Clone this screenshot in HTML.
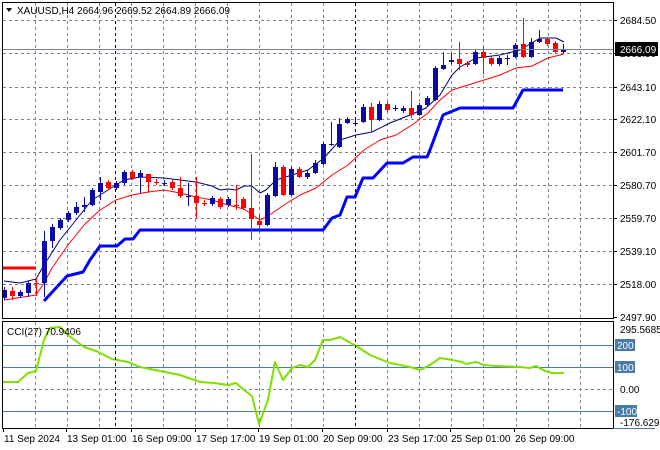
<!DOCTYPE html>
<html><head><meta charset="utf-8"><style>
body{margin:0;background:#fff;width:660px;height:450px;overflow:hidden}
svg{display:block;font-family:"Liberation Sans",sans-serif;font-size:10px}
</style></head><body>
<svg id="s" width="660" height="450" xmlns="http://www.w3.org/2000/svg">
<rect width="660" height="450" fill="#fff"/>
<g id="grid" stroke="#7a8491" stroke-dasharray="3,3" stroke-width="1"></g>
<g id="plot"></g>
<line x1="3" y1="49.5" x2="613" y2="49.5" stroke="#7a8491"/>
<line x1="115.5" y1="3" x2="115.5" y2="428" stroke="#000" stroke-dasharray="3,3"/>
<line x1="355.5" y1="3" x2="355.5" y2="428" stroke="#000" stroke-dasharray="3,3"/>
<rect x="2.5" y="2.5" width="611" height="316" fill="none" stroke="#000"/>
<rect x="2.5" y="321.5" width="611" height="107" fill="none" stroke="#000"/>
<polygon points="6,8 12,8 9,12" fill="#000"/>
<text x="17" y="14" fill="#000">XAUUSD,H4  2664.96 2669.52 2664.89 2666.09</text>
<text x="7" y="335" fill="#000">CCI(27) 70.9406</text>
<g id="axis" fill="#000"></g>
</svg>
<script>
var NS="http://www.w3.org/2000/svg",g=document.getElementById('grid'),p=document.getElementById('plot'),ax=document.getElementById('axis');
function el(par,t,a,txt){var e=document.createElementNS(NS,t);for(var k in a)e.setAttribute(k,a[k]);if(txt)e.textContent=txt;par.appendChild(e);return e;}
var vx=[35,67,99,131,163,195,227,259,291,323,387,419,451,483,516,548,580];
vx.forEach(function(x){el(g,'line',{x1:x+.5,y1:3,x2:x+.5,y2:318});el(g,'line',{x1:x+.5,y1:322,x2:x+.5,y2:428});});
var hy=[20,53,87,119,152,185,218,251,284];
hy.forEach(function(y){el(g,'line',{x1:3,y1:y+.5,x2:613,y2:y+.5});});
el(g,'line',{x1:3,y1:389.5,x2:613,y2:389.5});
[345,367,411].forEach(function(y){el(p,'line',{x1:3,y1:y+.5,x2:613,y2:y+.5,stroke:'#4a7aa8'});});
// candles: x, top, bottom, wickTop, wickBot, color
var C=[[4,290,298,287,300,'b'],[12,291,296,287,300,'r'],[20,292,296,290,298,'b'],[28,283,293,281,297,'b'],[36,283,284,277,296,'r'],[44,241,283,231,297,'b'],[52,227,241,224,248,'b'],[60,220,228,218,230,'b'],[68,213,220,211,222,'b'],[76,207,213,202,215,'b'],[84,205,207,197,212,'b'],[92,190,205,188,206,'b'],[100,183,192,177,200,'b'],[108,182,188,180,190,'r'],[116,183,188,181,190,'b'],[124,172,183,170,185,'b'],[132,172,178,170,180,'r'],[140,173,177,170,193,'b'],[148,174,182,175,193,'r'],[156,182,183,179,185,'r'],[164,183,184,180,186,'b'],[172,182,188,180,190,'r'],[180,188,196,177,198,'r'],[188,196,197,183,206,'b'],[196,196,203,177,218,'r'],[204,203,204,200,206,'r'],[212,198,204,196,206,'b'],[220,199,207,197,209,'r'],[228,199,205,197,207,'b'],[236,205,206,185,210,'r'],[243,199,208,197,210,'r'],[251,208,219,154,240,'r'],[259,221,225,215,232,'r'],[267,195,225,193,226,'b'],[275,167,196,162,197,'b'],[283,167,195,165,196,'r'],[291,169,195,167,196,'b'],[299,169,177,167,178,'r'],[307,173,177,170,179,'b'],[315,163,173,160,174,'b'],[323,144,164,142,165,'b'],[331,144,145,122,146,'b'],[339,124,147,118,148,'b'],[347,119,123,117,124,'b'],[355,123,124,120,126,'b'],[363,107,122,104,123,'b'],[371,107,120,103,132,'r'],[379,104,120,101,121,'b'],[387,104,110,102,112,'r'],[395,108,109,105,111,'b'],[403,108,111,106,113,'b'],[411,108,115,91,118,'r'],[419,105,115,103,116,'b'],[427,98,105,96,106,'b'],[435,68,100,66,101,'b'],[443,65,69,52,70,'b'],[451,60,62,53,64,'b'],[459,59,64,42,70,'r'],[467,63,65,61,67,'r'],[475,52,64,50,65,'b'],[483,52,58,47,74,'r'],[491,58,64,56,66,'r'],[499,58,64,56,66,'b'],[507,58,59,55,65,'b'],[515,45,57,43,58,'b'],[523,44,57,18,58,'r'],[531,42,57,38,58,'b'],[539,39,42,30,43,'b'],[547,39,44,37,46,'r'],[555,43,52,41,53,'r'],[563,49,52,44,53,'b']];
function pl(pts,col,w){el(p,'polyline',{points:pts.map(function(a){return a.join(',')}).join(' '),fill:'none',stroke:col,'stroke-width':w,'stroke-linejoin':'round'});}
pl([[3,268],[36,268]],'#f00',3);
pl([[44,301],[67,276],[83,272],[90,260],[100,246],[117,246],[125,239],[133,239],[140,230],[323,230],[332,218],[340,215],[347,197],[355,197],[363,178],[373,178],[387,163],[403,163],[413,157],[427,157],[430,150],[443,115],[460,108],[513,108],[523,90],[563,90]],'#0000ff',3);
pl([[4,300],[36,295],[44,283],[52,268],[68,245],[84,225],[100,210],[116,200],[132,195],[148,192],[164,190],[180,193],[196,197],[212,200],[228,205],[244,209],[260,220],[268,216],[284,205],[300,195],[316,188],[332,175],[348,165],[364,150],[380,140],[396,135],[412,125],[428,113],[440,100],[452,90],[468,85],[484,80],[500,75],[516,68],[532,66],[548,58],[564,54]],'#f00',1);
pl([[4,281],[20,283],[36,279],[44,265],[60,240],[76,220],[92,200],[108,190],[124,180],[140,177],[164,178],[180,180],[196,182],[212,186],[220,190],[228,189],[236,190],[244,186],[252,186],[260,193],[266,190],[276,180],[292,175],[308,170],[324,158],[340,140],[356,135],[372,132],[390,123],[410,115],[426,108],[440,95],[452,75],[460,67],[476,58],[500,55],[520,50],[540,38],[556,38],[564,42]],'#00007a',1);
C.forEach(function(c){var col=c[5]=='b'?'#0a0aa8':'#f00';var x=c[0];
el(p,'line',{x1:x+.5,y1:c[3],x2:x+.5,y2:c[4],stroke:col});
el(p,'rect',{x:x-2,y:c[1],width:5,height:Math.max(1,c[2]-c[1]),fill:col});});
pl([[3,382],[18,382],[28,373],[36,371],[44,340],[50,328],[60,327],[68,335],[84,347],[96,351],[112,359],[128,362],[140,367],[160,371],[180,375],[200,382],[214,383],[228,385],[236,383],[244,390],[252,396],[259,424],[268,400],[275,362],[283,380],[292,368],[300,365],[308,367],[315,360],[323,340],[330,340],[340,337],[356,346],[370,355],[390,363],[410,367],[420,370],[430,365],[440,358],[452,360],[462,362],[466,364],[476,362],[484,365],[496,366],[520,367],[530,368],[536,366],[545,371],[552,373],[564,373]],'#7fe000',2);
var pr=[[20,'2684.50'],[53,'2663.50'],[87,'2643.10'],[119,'2622.10'],[152,'2601.70'],[185,'2580.70'],[218,'2559.70'],[251,'2539.10'],[284,'2518.00'],[317,'2497.90']];
pr.forEach(function(a){el(ax,'line',{x1:613,y1:a[0]+.5,x2:617,y2:a[0]+.5,stroke:'#000'});el(ax,'text',{x:620,y:a[0]+4},a[1]);});
el(ax,'rect',{x:615,y:42,width:43,height:14,fill:'#000'});
el(ax,'text',{x:620,y:53,fill:'#fff'},'2666.09');
el(ax,'text',{x:620,y:333},'295.5685');
[[345,'200',1],[367,'100',1],[389,'0.00',0],[411,'-100',1]].forEach(function(a){if(a[2]){el(ax,'rect',{x:615,y:a[0]-6,width:a[1]=='-100'?22:20,height:12,fill:'#4a7aa8'});el(ax,'text',{x:617,y:a[0]+4,fill:'#fff'},a[1]);}else el(ax,'text',{x:620,y:a[0]+4},a[1]);});
el(ax,'text',{x:620,y:426},'-176.629');
el(ax,'line',{x1:613,y1:428.5,x2:655,y2:428.5,stroke:'#4a7aa8'});
[[3,'11 Sep 2024'],[66,'13 Sep 01:00'],[131,'16 Sep 09:00'],[195,'17 Sep 17:00'],[258,'19 Sep 01:00'],[322,'20 Sep 09:00'],[387,'23 Sep 17:00'],[450,'25 Sep 01:00'],[514,'26 Sep 09:00']].forEach(function(a){el(ax,'line',{x1:a[0]+.5,y1:428,x2:a[0]+.5,y2:432,stroke:'#000'});el(ax,'text',{x:a[0]+1,y:442},a[1]);});
</script>
</body></html>
